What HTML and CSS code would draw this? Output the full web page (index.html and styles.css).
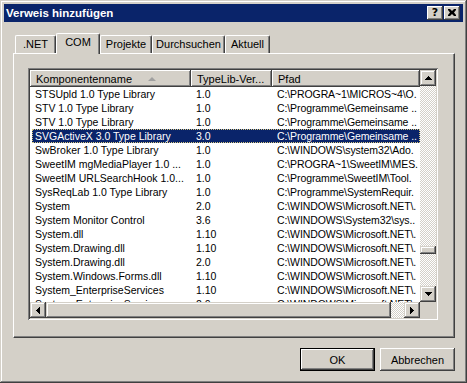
FILE: index.html
```html
<!DOCTYPE html>
<html>
<head>
<meta charset="utf-8">
<link rel="stylesheet" href="styles.css">
</head>
<body>
<div class="window">
  <div class="titlebar">
    <span class="title">Verweis hinzufügen</span>
    <div class="tb-buttons">
      <div class="tb-btn help">?</div>
      <div class="tb-btn close">
        <svg width="8" height="7" viewBox="0 0 8 7"><path d="M0 0h2l2 2 2-2h2v1l-2 2.5 2 2.5v1h-2l-2-2-2 2h-2v-1l2-2.5-2-2.5z" fill="#000"/></svg>
      </div>
    </div>
  </div>
  <div class="client">
    <div class="tabs">
      <div class="tab t-net">.NET</div>
      <div class="tab t-com selected">COM</div>
      <div class="tab t-proj">Projekte</div>
      <div class="tab t-browse">Durchsuchen</div>
      <div class="tab t-recent">Aktuell</div>
    </div>
    <div class="panel">
      <div class="listview">
        <div class="lv-main">
          <div class="lv-header">
            <div class="hcell c1">Komponentenname<span class="sort"></span></div>
            <div class="hcell c2">TypeLib-Ver...</div>
            <div class="hcell c3">Pfad</div>
          </div>
          <div class="lv-rows">
            <div class="row"><span class="c1">STSUpld 1.0 Type Library</span><span class="c2">1.0</span><span class="c3">C:\PROGRA~1\MICROS~4\O.</span></div>
            <div class="row"><span class="c1">STV 1.0 Type Library</span><span class="c2">1.0</span><span class="c3">C:\Programme\Gemeinsame ..</span></div>
            <div class="row"><span class="c1">STV 1.0 Type Library</span><span class="c2">1.0</span><span class="c3">C:\Programme\Gemeinsame ..</span></div>
            <div class="row sel"><span class="c1">SVGActiveX 3.0 Type Library</span><span class="c2">3.0</span><span class="c3">C:\Programme\Gemeinsame ..</span></div>
            <div class="row"><span class="c1">SwBroker 1.0 Type Library</span><span class="c2">1.0</span><span class="c3">C:\WINDOWS\system32\Ado.</span></div>
            <div class="row"><span class="c1">SweetIM mgMediaPlayer 1.0 ...</span><span class="c2">1.0</span><span class="c3">C:\PROGRA~1\SweetIM\MES.</span></div>
            <div class="row"><span class="c1">SweetIM URLSearchHook 1.0...</span><span class="c2">1.0</span><span class="c3">C:\Programme\SweetIM\Tool.</span></div>
            <div class="row"><span class="c1">SysReqLab 1.0 Type Library</span><span class="c2">1.0</span><span class="c3">C:\Programme\SystemRequir.</span></div>
            <div class="row"><span class="c1">System</span><span class="c2">2.0</span><span class="c3">C:\WINDOWS\Microsoft.NET\.</span></div>
            <div class="row"><span class="c1">System Monitor Control</span><span class="c2">3.6</span><span class="c3">C:\WINDOWS\System32\sys..</span></div>
            <div class="row"><span class="c1">System.dll</span><span class="c2">1.10</span><span class="c3">C:\WINDOWS\Microsoft.NET\.</span></div>
            <div class="row"><span class="c1">System.Drawing.dll</span><span class="c2">1.10</span><span class="c3">C:\WINDOWS\Microsoft.NET\.</span></div>
            <div class="row"><span class="c1">System.Drawing.dll</span><span class="c2">2.0</span><span class="c3">C:\WINDOWS\Microsoft.NET\.</span></div>
            <div class="row"><span class="c1">System.Windows.Forms.dll</span><span class="c2">1.10</span><span class="c3">C:\WINDOWS\Microsoft.NET\.</span></div>
            <div class="row"><span class="c1">System_EnterpriseServices</span><span class="c2">1.10</span><span class="c3">C:\WINDOWS\Microsoft.NET\.</span></div>
            <div class="row"><span class="c1">System_EnterpriseServices</span><span class="c2">2.0</span><span class="c3">C:\WINDOWS\Microsoft.NET\.</span></div>
          </div>
        </div>
        <div class="vscroll">
          <div class="sbtn"><svg width="7" height="4" viewBox="0 0 7 4"><path d="M3 0h1v1h1v1h1v1h1v1H0V3h1V2h1V1h1z" fill="#000"/></svg></div>
          <div class="track v-before"></div>
          <div class="thumb v-thumb"></div>
          <div class="track v-after"></div>
          <div class="sbtn"><svg width="7" height="4" viewBox="0 0 7 4"><path d="M0 0h7v1H6v1H5v1H4v1H3V3H2V2H1V1H0z" fill="#000"/></svg></div>
        </div>
        <div class="hscroll">
          <div class="sbtn"><svg width="4" height="7" viewBox="0 0 4 7"><path d="M3 0h1v7H3V6H2V5H1V4H0V3h1V2h1V1h1z" fill="#000"/></svg></div>
          <div class="thumb h-thumb"></div>
          <div class="track h-after"></div>
          <div class="sbtn"><svg width="4" height="7" viewBox="0 0 4 7"><path d="M0 0h1v1h1v1h1v1h1v1H3v1H2v1H1v1H0z" fill="#000"/></svg></div>
        </div>
        <div class="sizebox"></div>
      </div>
    </div>
    <div class="buttons">
      <div class="btn default">OK</div>
      <div class="btn">Abbrechen</div>
    </div>
  </div>
</div>
</body>
</html>
```

FILE: styles.css
```css
* { box-sizing: border-box; }
html, body { margin: 0; padding: 0; }
body {
  width: 467px;
  height: 383px;
  overflow: hidden;
  background: #d4d0c8;
  font-family: "Liberation Sans", Arial, sans-serif;
  font-size: 10.5px;
  color: #000;
}
.window {
  width: 467px;
  height: 383px;
  padding: 4px;
  background: #d4d0c8;
  box-shadow: inset -1px -1px #404040, inset 1px 1px #d4d0c8, inset -2px -2px #808080, inset 2px 2px #fff;
  display: flex;
  flex-direction: column;
}
.titlebar {
  height: 18px;
  background: #0a246a;
  color: #fff;
  display: flex;
  align-items: center;
  justify-content: space-between;
  padding: 0 3px 0 2px;
}
.title {
  font-weight: bold;
  font-size: 11.5px;
}
.tb-buttons { display: flex; gap: 1px; }
.tb-btn {
  width: 16px;
  height: 14px;
  background: #d4d0c8;
  box-shadow: inset -1px -1px #404040, inset 1px 1px #fff, inset -2px -2px #808080, inset 2px 2px #d4d0c8;
  display: flex;
  align-items: center;
  justify-content: center;
  color: #000;
  font-family: "DejaVu Sans", sans-serif;
  font-weight: bold;
  font-size: 11px;
  line-height: 14px;
  padding-bottom: 1px;
}
.client {
  flex: 1;
  padding: 11px 8px 0 9px;
  display: flex;
  flex-direction: column;
}
.tabs {
  height: 20px;
  display: flex;
  align-items: flex-end;
  padding-left: 2px;
}
.tab {
  height: 18px;
  border-top: 1px solid #fff;
  border-left: 1px solid #fff;
  border-right: 1px solid #404040;
  border-radius: 2px 2px 0 0;
  box-shadow: inset -1px 0 #808080;
  text-align: center;
  line-height: 16px;
  background: #d4d0c8;
  font-size: 11px;
}
.t-net { width: 41px; }
.t-com { width: 44px; }
.t-proj { width: 52px; }
.t-browse { width: 73px; }
.t-recent { width: 45px; }
.tab.selected {
  height: 21px;
  margin-bottom: -1px;
  line-height: 17px;
  position: relative;
  z-index: 1;
}
.panel {
  width: 442px;
  height: 285px;
  border-top: 1px solid #fff;
  border-left: 1px solid #fff;
  border-right: 1px solid #404040;
  border-bottom: 1px solid #404040;
  box-shadow: inset -1px -1px #808080;
  padding: 14px 15px 16px 14px;
}
.listview {
  width: 410px;
  height: 252px;
  padding: 2px;
  background: #fff;
  box-shadow: inset 1px 1px #808080, inset -1px -1px #fff, inset 2px 2px #404040, inset -2px -2px #d4d0c8;
  display: grid;
  grid-template-columns: 390px 16px;
  grid-template-rows: 232px 16px;
}
.lv-main { overflow: hidden; }
.lv-header {
  display: flex;
  height: 17px;
  background: #d4d0c8;
}
.hcell {
  height: 17px;
  line-height: 16px;
  padding-left: 6px;
  font-size: 11px;
  box-shadow: inset -1px -1px #404040, inset 1px 1px #fff, inset -2px -2px #808080;
  white-space: nowrap;
  overflow: hidden;
  display: flex;
  align-items: center;
}
.c1 { width: 161px; }
.c2 { width: 81px; }
.c3 { width: 148px; }
.sort {
  width: 0;
  height: 0;
  margin-left: 16px;
  border-left: 4px solid transparent;
  border-right: 4px solid transparent;
  border-bottom: 4px solid #a0a0a0;
}
.row {
  display: flex;
  height: 14px;
  line-height: 14px;
  white-space: nowrap;
}
.row span {
  display: block;
  overflow: hidden;
  text-overflow: clip;
  padding-left: 5px;
}
.row .c1 { width: 161px; }
.row .c3 { width: 148px; padding-left: 5px; letter-spacing: -0.1px; }
.row.sel {
  background: #0a246a;
  color: #fff;
  margin-left: 2px;
  outline: 1px dotted #d8c880;
  outline-offset: -1px;
}
.row.sel .c1 { width: 159px; padding-left: 3px; }
.vscroll {
  display: flex;
  flex-direction: column;
}
.hscroll { display: flex; }
.sbtn {
  width: 16px;
  height: 16px;
  flex: none;
  background: #d4d0c8;
  box-shadow: inset -1px -1px #404040, inset 1px 1px #d4d0c8, inset -2px -2px #808080, inset 2px 2px #fff;
  display: flex;
  align-items: center;
  justify-content: center;
}
.sbtn svg { display: block; }
.track {
  background: repeating-conic-gradient(#d4d0c8 0 25%, #fff 0 50%) 0 0 / 2px 2px;
}
.thumb {
  background: #d4d0c8;
  box-shadow: inset -1px -1px #404040, inset 1px 1px #d4d0c8, inset -2px -2px #808080, inset 2px 2px #fff;
}
.v-before { height: 160px; }
.v-thumb { height: 8px; }
.v-after { flex: 1; }
.h-thumb { width: 345px; }
.h-after { flex: 1; }
.sizebox { background: #d4d0c8; }
.buttons {
  margin-top: 10px;
  width: 442px;
  display: flex;
  justify-content: flex-end;
  gap: 5px;
}
.btn {
  width: 75px;
  height: 23px;
  font-size: 11px;
  background: #d4d0c8;
  box-shadow: inset -1px -1px #404040, inset 1px 1px #fff, inset -2px -2px #808080, inset 2px 2px #d4d0c8;
  display: flex;
  align-items: center;
  justify-content: center;
}
.btn.default {
  border: 1px solid #000;
}
```
